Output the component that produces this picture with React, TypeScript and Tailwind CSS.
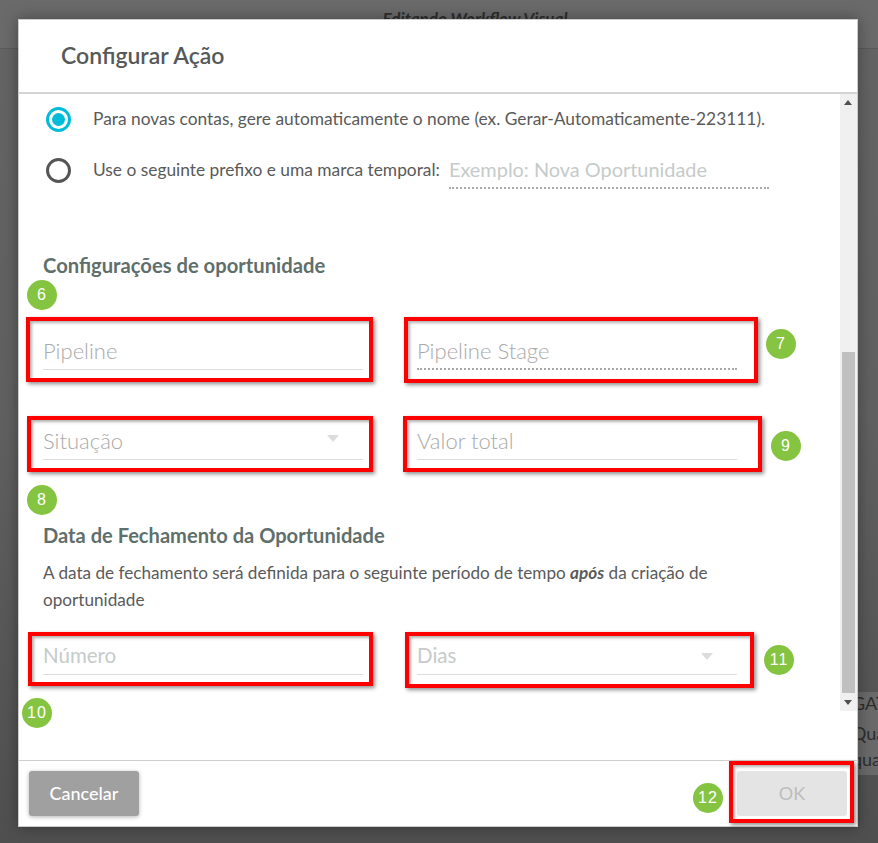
function Badge({ n, className }: { n: string; className: string }) {
  return (
    <div
      className={`absolute flex h-[30px] w-[30px] items-center justify-center rounded-full bg-[#85c441] font-['Liberation_Sans',sans-serif] text-[16px] tracking-[1px] text-white ${className}`}
    >
      {n}
    </div>
  )
}

function RedBox({ className }: { className: string }) {
  return <div className={`absolute border-[4px] border-[#ff0000] shadow-[2px_2px_4px_rgba(0,0,0,0.45),inset_2px_2px_3px_rgba(0,0,0,0.3)] ${className}`} />
}

function Field({
  label,
  dotted,
  arrow,
  className,
  pale,
}: {
  label: string
  dotted?: boolean
  arrow?: string
  className?: string
  pale?: boolean
}) {
  return (
    <div
      className={`relative flex h-[36px] w-[320px] items-center pb-[2px] ${pale ? 'text-[20.5px] text-[#c5cbc9]' : 'text-[22px] font-light text-[#a9a9a9]'} ${
        dotted ? 'border-b-2 border-dotted border-[#aaaaaa]' : 'border-b border-[#dddddd]'
      } ${className ?? ''}`}
    >
      <span>{label}</span>
      {arrow && (
        <span className={`absolute right-[24px] h-0 w-0 border-x-[6px] border-t-[7px] border-x-transparent border-t-[#dcdcdc] ${arrow}`} />
      )}
    </div>
  )
}

export default function App() {
  return (
    <div className="relative h-[843px] w-[878px] overflow-hidden bg-gradient-to-b from-[#646464] via-[#606060] to-[#4f4f4f] font-['Lato',sans-serif]">
      {/* page behind the overlay */}
      <div className="flex h-[49px] justify-center border-b border-[#5a5a5a] bg-[#6a6a6a] pt-[6px] text-[17px] font-bold italic text-[#2e2e2e]">
        <span className="ml-[72px]">Editando Workflow Visual</span>
      </div>
      <div className="absolute left-[852px] top-[692px] h-[83px] w-[26px] overflow-hidden bg-[#6a6a6a] text-[18px] leading-[26px] text-[#2e2e2e]">
        <div className="mb-[6px] leading-[22px]">GAT</div>
        <div>Qua</div>
        <div>qua</div>
      </div>

      {/* dialog */}
      <div className="absolute left-[18px] top-[19px] flex h-[808px] w-[840px] flex-col border border-[#cccccc] bg-white shadow-[0_0_14px_rgba(0,0,0,0.35)]">
        <div className="flex h-[74px] shrink-0 items-center border-b-2 border-[#d4d4d4] pb-[2px] pl-[42px] text-[23px] font-semibold text-[#55595a]">
          Configurar Ação
        </div>

        <div className="flex h-[667px] shrink-0 items-start justify-between border-b border-[#cfcfcf]">
          <div className="w-[822px] pl-[24px]">
            <div className="flex h-[50px] items-center pl-[3px] text-[17.35px] text-[#5a5a5a]">
              <span className="flex h-[25px] w-[25px] items-center justify-center rounded-full border-[3px] border-[#00bcd9]">
                <span className="h-[13px] w-[13px] rounded-full bg-[#00bcd9]" />
              </span>
              <span className="ml-[22px]">Para novas contas, gere automaticamente o nome (ex. Gerar-Automaticamente-223111).</span>
            </div>
            <div className="flex h-[52px] items-center pl-[3px] text-[17.35px] text-[#5a5a5a]">
              <span className="h-[25px] w-[25px] rounded-full border-[3px] border-[#555555]" />
              <span className="ml-[22px]">Use o seguinte prefixo e uma marca temporal:</span>
              <Field label="Exemplo: Nova Oportunidade" dotted pale className="ml-[9px] mt-[2px] !pb-0 !text-[19.9px]" />
            </div>

            <h2 className="mt-[57px] text-[20.2px] font-bold leading-[24px] text-[#5f6f6c]">Configurações de oportunidade</h2>

            <div className="mt-[57px] flex gap-[54px]">
              <Field label="Pipeline" />
              <Field label="Pipeline Stage" dotted />
            </div>
            <div className="mt-[54px] flex gap-[54px]">
              <Field label="Situação" arrow="top-[11px]" />
              <Field label="Valor total" />
            </div>

            <h2 className="mt-[63px] text-[20.1px] font-bold leading-[24px] text-[#5f6f6c]">Data de Fechamento da Oportunidade</h2>
            <p className="mt-[12px] w-[720px] text-[17.15px] leading-[27px] text-[#5a5a5a]">
              A data de fechamento será definida para o seguinte período de tempo <b className="italic">após</b> da criação de oportunidade
            </p>
            <div className="mt-[26px] flex gap-[54px]">
              <Field label="Número" pale />
              <Field label="Dias" arrow="top-[14px]" pale />
            </div>
          </div>

          {/* scrollbar */}
          <div className="relative h-[617px] w-[17px] bg-[#f0f0f0]">
            <span className="absolute left-[4px] top-[6px] h-0 w-0 border-x-[4px] border-b-[5px] border-x-transparent border-b-[#505050]" />
            <div className="absolute bottom-[18px] left-[2px] h-[341px] w-[13px] bg-[#c0c0c0]" />
            <span className="absolute bottom-[6px] left-[4px] h-0 w-0 border-x-[4px] border-t-[5px] border-x-transparent border-t-[#505050]" />
          </div>
        </div>

        <div className="flex flex-1 items-center justify-between px-[10px]">
          <button className="h-[45px] w-[110px] rounded-[3px] bg-[#a0a0a0] text-[18px] font-medium text-white shadow-[0_1px_4px_rgba(0,0,0,0.3)]">
            Cancelar
          </button>
          <button className="h-[45px] w-[110px] rounded-[3px] bg-[#e4e4e4] text-[18px] text-[#bdbdbd]">OK</button>
        </div>
      </div>

      {/* annotations */}
      <RedBox className="left-[26px] top-[317px] h-[65px] w-[347px]" />
      <RedBox className="left-[404px] top-[317px] h-[66px] w-[354px]" />
      <RedBox className="left-[27px] top-[416px] h-[56px] w-[346px]" />
      <RedBox className="left-[403px] top-[416px] h-[56px] w-[359px]" />
      <RedBox className="left-[28px] top-[632px] h-[54px] w-[345px]" />
      <RedBox className="left-[405px] top-[632px] h-[56px] w-[349px]" />
      <RedBox className="left-[729px] top-[761px] h-[62px] w-[125px]" />
      <Badge n="6" className="left-[27px] top-[280px]" />
      <Badge n="7" className="left-[766px] top-[329px]" />
      <Badge n="8" className="left-[27px] top-[485px]" />
      <Badge n="9" className="left-[771px] top-[431px]" />
      <Badge n="10" className="left-[22px] top-[698px]" />
      <Badge n="11" className="left-[764px] top-[645px]" />
      <Badge n="12" className="left-[693px] top-[783px]" />
    </div>
  )
}
